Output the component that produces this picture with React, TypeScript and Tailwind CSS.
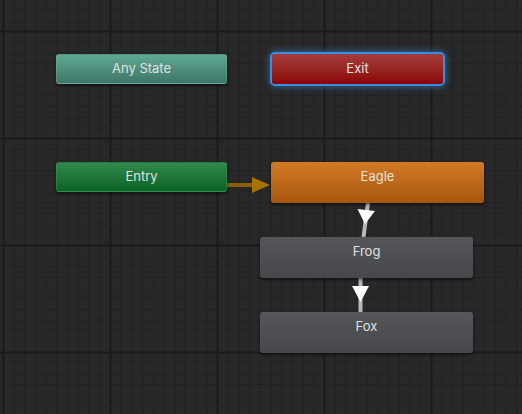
const STEP = 10.7

function Grid() {
  const xs = Array.from({ length: 50 }, (_, i) => i)
  const ys = Array.from({ length: 40 }, (_, i) => i)
  return (
    <svg className="absolute inset-0" width={522} height={414}>
      {xs.map((i) => (
        <line
          key={'x' + i}
          x1={3.5 + i * STEP}
          x2={3.5 + i * STEP}
          y1={0}
          y2={414}
          stroke={i % 10 === 0 ? '#1a1a1a' : '#232323'}
          strokeWidth={i % 10 === 0 ? 2 : 1}
        />
      ))}
      {ys.map((i) => (
        <line
          key={'y' + i}
          y1={31.5 + (i - 3) * STEP}
          y2={31.5 + (i - 3) * STEP}
          x1={0}
          x2={522}
          stroke={(i - 3) % 10 === 0 ? '#1a1a1a' : '#232323'}
          strokeWidth={(i - 3) % 10 === 0 ? 2 : 1}
        />
      ))}
    </svg>
  )
}

function Transitions() {
  return (
    <svg className="absolute inset-0" width={522} height={414}>
      {/* Entry -> Eagle */}
      <line x1={227} y1={185} x2={262} y2={185} stroke="#8a5d06" strokeWidth={4} />
      <polygon points="252,177 270,185 252,193" fill="#a87304" />
      {/* Eagle -> Frog */}
      <line x1={368} y1={203} x2={363.5} y2={237} stroke="#b8b8b8" strokeWidth={4} />
      <polygon points="357.5,209 375,211 365,224" fill="#ffffff" />
      {/* Frog -> Fox */}
      <line x1={360.5} y1={277} x2={360.5} y2={312} stroke="#b8b8b8" strokeWidth={4} />
      <polygon points="352,286 369,286 360.5,302" fill="#ffffff" />
    </svg>
  )
}

function SmallNode({ label, className }: { label: string; className: string }) {
  return (
    <div
      className={`absolute w-[171px] h-[30px] rounded-[3px] flex items-center justify-center text-[13px] text-[#e0e0e0] ${className}`}
    >
      {label}
    </div>
  )
}

function StateNode({ label, className }: { label: string; className: string }) {
  return (
    <div
      className={`absolute w-[213px] h-[41px] rounded-[3px] text-[13px] text-[#e0e0e0] shadow-[0_2px_3px_rgba(0,0,0,0.5)] ${className}`}
    >
      <div className="h-[29px] flex items-center justify-center">{label}</div>
    </div>
  )
}

export default function App() {
  return (
    <div
      className="relative w-[522px] h-[414px] overflow-hidden bg-[#282828]"
      style={{ fontFamily: 'Inter, "Noto Sans", sans-serif' }}
    >
      <Grid />
      <Transitions />

      <SmallNode
        label="Any State"
        className="left-[56px] top-[54px] bg-linear-to-b from-[#60a893] to-[#3e7668] border border-[#6fb39f]/40 shadow-[0_2px_3px_rgba(0,0,0,0.5)]"
      />
      <SmallNode
        label="Exit"
        className="left-[272px] top-[54px] bg-linear-to-b from-[#a43c3c] to-[#8a0000] ring-2 ring-[#3a8ee0] shadow-[0_0_6px_3px_rgba(58,142,224,0.55)]"
      />
      <SmallNode
        label="Entry"
        className="left-[56px] top-[162px] bg-linear-to-b from-[#2e8a4c] to-[#0a6226] border border-[#3c9a5a]/40 shadow-[0_2px_3px_rgba(0,0,0,0.5)]"
      />

      <StateNode
        label="Eagle"
        className="left-[271px] top-[162px] bg-linear-to-b from-[#d27b25] to-[#a8560e]"
      />
      <StateNode
        label="Frog"
        className="left-[260px] top-[237px] bg-linear-to-b from-[#54565a] to-[#46484b]"
      />
      <StateNode
        label="Fox"
        className="left-[260px] top-[312px] bg-linear-to-b from-[#54565a] to-[#46484b]"
      />
    </div>
  )
}
